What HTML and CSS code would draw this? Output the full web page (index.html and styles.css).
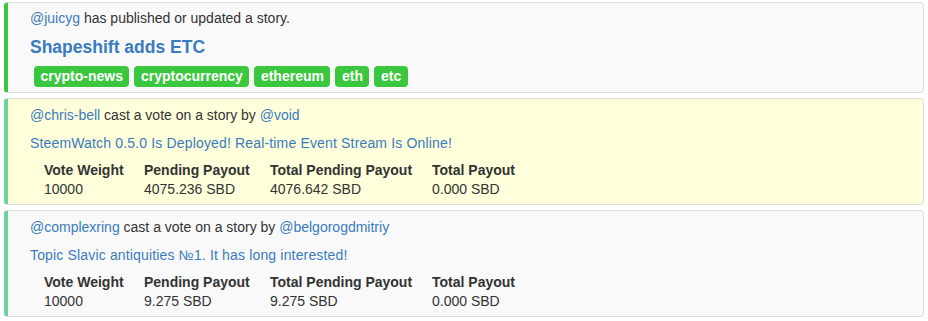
FILE: index.html
```html
<!DOCTYPE html>
<html lang="en">
    <head>
        <meta charset="UTF-8">
        <meta name="viewport" content="width=device-width, initial-scale=1.0">
        <title>Feed</title>
        <link rel="stylesheet" href="styles.css">
    </head>
    <body>
        <div class="feed">
            <div class="event event-post">
                <div class="event-line"><a href="#">@juicyg</a> has published or updated a story.</div>
                <a class="post-title" href="#">Shapeshift adds ETC</a>
                <div class="tags">
                    <span class="tag">crypto-news</span>
                    <span class="tag">cryptocurrency</span>
                    <span class="tag">ethereum</span>
                    <span class="tag">eth</span>
                    <span class="tag">etc</span>
                </div>
            </div>

            <div class="event event-vote highlight">
                <div class="event-line"><a href="#">@chris-bell</a> cast a vote on a story by <a href="#">@void</a></div>
                <a class="vote-title" href="#">SteemWatch 0.5.0 Is Deployed! Real-time Event Stream Is Online!</a>
                <div class="vote-table">
                    <div class="th">Vote Weight</div>
                    <div class="th">Pending Payout</div>
                    <div class="th">Total Pending Payout</div>
                    <div class="th">Total Payout</div>
                    <div class="td">10000</div>
                    <div class="td">4075.236 SBD</div>
                    <div class="td">4076.642 SBD</div>
                    <div class="td">0.000 SBD</div>
                </div>
            </div>

            <div class="event event-vote">
                <div class="event-line"><a href="#">@complexring</a> cast a vote on a story by <a href="#">@belgorogdmitriy</a></div>
                <a class="vote-title" href="#">Topic Slavic antiquities №1. It has long interested!</a>
                <div class="vote-table">
                    <div class="th">Vote Weight</div>
                    <div class="th">Pending Payout</div>
                    <div class="th">Total Pending Payout</div>
                    <div class="th">Total Payout</div>
                    <div class="td">10000</div>
                    <div class="td">9.275 SBD</div>
                    <div class="td">9.275 SBD</div>
                    <div class="td">0.000 SBD</div>
                </div>
            </div>
        </div>
    </body>
</html>
```

FILE: styles.css
```css
body {
    font-family: "Liberation Sans", Arial, sans-serif;
    font-size: 14px;
    line-height: 20px;
    color: #333;
    margin: 0;
    padding: 2px 4px 0 4px;
}

a {
    color: #3a7bbf;
    text-decoration: none;
}

.feed {
    display: flex;
    flex-direction: column;
    gap: 5px;
}

.event {
    display: flex;
    flex-direction: column;
    align-items: flex-start;
    background-color: #f9f9f9;
    border: 1px solid #ddd;
    border-left: 4px solid #6fcf9f;
    border-radius: 4px;
    padding: 5px 20px 5px 22px;
}

.event-post {
    border-left-color: #3ac73e;
}

.highlight {
    background-color: #ffffdc;
}

.event-vote {
    padding-top: 6px;
}

.post-title {
    font-size: 17.5px;
    font-weight: bold;
    line-height: 24px;
    margin-top: 7px;
}

.tags {
    display: flex;
    gap: 5px;
    margin: 7px 0 0 4px;
}

.tag {
    background-color: #3ac73e;
    color: #fff;
    font-weight: bold;
    padding: 0 6.5px;
    border-radius: 4px;
    line-height: 21px;
}

.vote-title {
    margin-top: 8px;
    letter-spacing: 0.16px;
}

.vote-table {
    display: grid;
    grid-template-columns: 100px 126px 162px auto;
    margin: 8px 0 0 14px;
    line-height: 19px;
}

.th {
    font-weight: bold;
}
```
